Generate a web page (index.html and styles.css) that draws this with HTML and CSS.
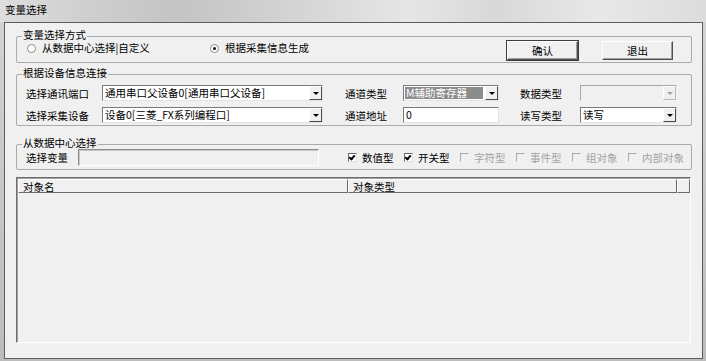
FILE: index.html
```html
<!DOCTYPE html>
<html lang="zh-CN">
<head>
  <meta charset="UTF-8">
  <title>变量选择</title>
  <link rel="stylesheet" href="styles.css">
</head>
<body>

  <div class="window">
    <div class="titlebar">变量选择</div>

    <div class="client">

      <div class="group group-mode">
        <span class="group-title">变量选择方式</span>
        <div class="mode-row">
          <label class="radio radio-first"><span class="radio-dot"></span>从数据中心选择|自定义</label>
          <label class="radio checked"><span class="radio-dot"></span>根据采集信息生成</label>
          <button class="btn btn-default">确认</button>
          <button class="btn">退出</button>
        </div>
      </div>

      <div class="group group-device">
        <span class="group-title">根据设备信息连接</span>
        <div class="device-grid">
          <span class="field-label">选择通讯端口</span>
          <div class="combo"><span class="combo-text">通用串口父设备0[通用串口父设备]</span><span class="drop"></span></div>
          <span class="field-label pad-mid">通道类型</span>
          <div class="combo"><span class="combo-text selected">M辅助寄存器</span><span class="drop"></span></div>
          <span class="field-label pad-right">数据类型</span>
          <div class="combo disabled"><span class="combo-text"></span><span class="drop"></span></div>

          <span class="field-label">选择采集设备</span>
          <div class="combo"><span class="combo-text">设备0[三菱_FX系列编程口]</span><span class="drop"></span></div>
          <span class="field-label pad-mid">通道地址</span>
          <div class="edit">0</div>
          <span class="field-label pad-right">读写类型</span>
          <div class="combo"><span class="combo-text">读写</span><span class="drop"></span></div>
        </div>
      </div>

      <div class="group group-center">
        <span class="group-title">从数据中心选择</span>
        <div class="center-row">
          <span class="var-label">选择变量</span>
          <div class="edit edit-disabled"></div>
          <div class="checks">
            <label class="check checked"><span class="check-box"></span>数值型</label>
            <label class="check checked"><span class="check-box"></span>开关型</label>
            <label class="check disabled"><span class="check-box"></span>字符型</label>
            <label class="check disabled"><span class="check-box"></span>事件型</label>
            <label class="check disabled"><span class="check-box"></span>组对象</label>
            <label class="check disabled"><span class="check-box"></span>内部对象</label>
          </div>
        </div>
      </div>

      <div class="listview">
        <div class="list-head">
          <span class="col col-name">对象名</span>
          <span class="col col-type">对象类型</span>
          <span class="col col-rest"></span>
        </div>
        <div class="list-body"></div>
      </div>

    </div>
  </div>

</body>
</html>
```

FILE: styles.css
```css
body {
  margin: 0;
  font-family: 'Noto Sans CJK SC', 'DejaVu Sans', sans-serif;
  font-size: 10.5px;
  color: #000;
  background-color: #c6c6c6;
}
.window {
  width: 706px;
  height: 361px;
  display: flex;
  flex-direction: column;
  background: linear-gradient(to bottom, #d4d4d4, #bcbcbc);
}
.titlebar {
  height: 22px;
  line-height: 20px;
  padding-left: 5px;
  background: linear-gradient(to right, #dedede 0%, #cfcfcf 12%, #c4c4c4 25%, #d2d2d2 40%, #e6e6e6 58%, #d8d8d8 70%, #e8e8e8 85%, #dcdcdc 100%);
}
.client {
  flex: 1;
  margin: 0 3px 2px 4px;
  border: 1px solid #5e5e5e;
  background-color: #f0f0f0;
  display: flex;
  flex-direction: column;
}

/* group boxes */
.group {
  position: relative;
  margin: 0 10px 0 11px;
  border: 1px solid #aaaaaa;
  border-radius: 2px;
}
.group-title {
  position: absolute;
  top: -8px;
  left: 5px;
  padding: 0 1px;
  line-height: 12px;
  background-color: #f0f0f0;
}
.group-mode {
  margin-top: 13px;
  padding: 4px 18px 2px 10px;
}
.group-device {
  margin-top: 11px;
  padding: 10px 0 2px 9px;
}
.group-center {
  margin-top: 18px;
  padding: 4px 0 3px 9px;
}

/* radio row */
.mode-row {
  display: flex;
  align-items: flex-start;
}
.radio {
  display: flex;
  align-items: center;
  gap: 6px;
  line-height: 12px;
  margin-top: 1px;
}
.radio-first {
  width: 183px;
}
.radio-dot {
  width: 7px;
  height: 7px;
  border: 1px solid #8d8d8d;
  border-radius: 50%;
  background-color: #fff;
  position: relative;
}
.radio.checked .radio-dot::after {
  content: '';
  position: absolute;
  left: 2px;
  top: 2px;
  width: 3px;
  height: 3px;
  border-radius: 50%;
  background-color: #111;
}
.btn {
  width: 71px;
  height: 19px;
  padding: 0;
  font: inherit;
  background-color: #f0f0f0;
  border: 1px solid;
  border-color: #ffffff #505050 #505050 #ffffff;
  box-shadow: inset -1px -1px 0 #a0a0a0;
}
.btn-default {
  margin-left: auto;
  margin-right: 24px;
  outline: 1px solid #3c3c3c;
  outline-offset: 0;
}

/* device grid */
.device-grid {
  display: grid;
  grid-template-columns: 76px 221px 80px 96px 81px 97px;
  grid-auto-rows: 16px;
  row-gap: 6px;
  align-items: center;
}
.field-label {
  white-space: nowrap;
}
.pad-mid {
  padding-left: 22px;
}
.pad-right {
  padding-left: 21px;
}
.combo {
  height: 16px;
  box-sizing: border-box;
  display: flex;
  border: 1px solid;
  border-color: #7a7a7a #e4e4e4 #e4e4e4 #7a7a7a;
  background-color: #fff;
}
.combo-text {
  flex: 1;
  padding-left: 2px;
  line-height: 14px;
  white-space: nowrap;
}
.combo-text.selected {
  margin: 1px 2px 1px 1px;
  padding-left: 1px;
  line-height: 12px;
  background-color: #8c8c8c;
  color: #fff;
}
.drop {
  width: 13px;
  flex: none;
  box-sizing: border-box;
  border: 1px solid;
  border-color: #ffffff #4a4a4a #4a4a4a #ffffff;
  background-color: #f0f0f0;
  display: flex;
  align-items: center;
  justify-content: center;
}
.drop::after {
  content: '';
  border-left: 3px solid transparent;
  border-right: 3px solid transparent;
  border-top: 3px solid #000;
}
.combo.disabled {
  background-color: #f0f0f0;
  border-color: #a8a8a8 #f4f4f4 #f4f4f4 #a8a8a8;
}
.combo.disabled .drop {
  border-color: #ffffff #b8b8b8 #b8b8b8 #ffffff;
}
.combo.disabled .drop::after {
  border-top-color: #a0a0a0;
}
.edit {
  height: 16px;
  box-sizing: border-box;
  padding-left: 2px;
  line-height: 14px;
  border: 1px solid;
  border-color: #7a7a7a #e4e4e4 #e4e4e4 #7a7a7a;
  background-color: #fff;
}

/* center row */
.center-row {
  display: flex;
  align-items: center;
  height: 17px;
}
.var-label {
  width: 52px;
}
.edit-disabled {
  width: 241px;
  height: 17px;
  background-color: #f0f0f0;
  border-color: #8a8a8a #ffffff #ffffff #8a8a8a;
  box-shadow: inset 1px 1px 0 #c8c8c8;
}
.checks {
  display: flex;
  margin-left: 29px;
}
.check {
  width: 56px;
  display: flex;
  align-items: center;
  gap: 5px;
  white-space: nowrap;
}
.check-box {
  width: 7px;
  height: 7px;
  border: 1px solid;
  border-color: #6a6a6a #e0e0e0 #e0e0e0 #6a6a6a;
  background-color: #fff;
  position: relative;
}
.check.checked .check-box::after {
  content: '';
  position: absolute;
  left: 1px;
  top: 0;
  width: 2px;
  height: 4px;
  border: solid #000;
  border-width: 0 2px 2px 0;
  transform: rotate(40deg);
}
.check.disabled {
  color: #a3a3a3;
}
.check.disabled .check-box {
  background-color: #f0f0f0;
  border-color: #a8a8a8 #f4f4f4 #f4f4f4 #a8a8a8;
}

/* list view */
.listview {
  margin: 7px 11px 15px 11px;
  flex: 1;
  display: flex;
  flex-direction: column;
  border: 1px solid;
  border-color: #6e6e6e #ffffff #ffffff #6e6e6e;
  box-shadow: inset 1px 1px 0 #a0a0a0;
  padding: 1px 0 0 1px;
}
.list-head {
  display: flex;
  height: 14px;
}
.col {
  box-sizing: border-box;
  height: 14px;
  line-height: 13px;
  padding-left: 4px;
  border: 1px solid;
  border-color: #ffffff #6a6a6a #6a6a6a #ffffff;
  background-color: #f0f0f0;
}
.col-name {
  width: 330px;
}
.col-type {
  width: 329px;
}
.col-rest {
  flex: 1;
}
.list-body {
  flex: 1;
  background-color: #f0f0f0;
}
```
